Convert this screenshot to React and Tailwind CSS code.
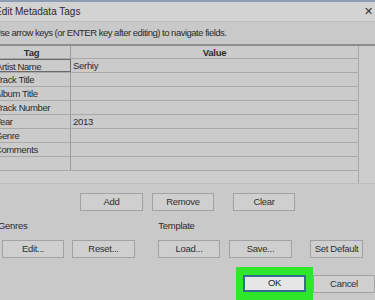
import React from "react";

const rows = [
  ["Artist Name", "Serhiy"],
  ["Track Title", ""],
  ["Album Title", ""],
  ["Track Number", ""],
  ["Year", "2013"],
  ["Genre", ""],
  ["Comments", ""],
  ["", ""],
];

function Btn({ children, className = "" }) {
  return (
    <div
      className={
        "h-[18px] flex items-center justify-center border border-[#a2a2a2] bg-[#cfcfcf] text-[#303030] shrink-0 " +
        className
      }
    >
      {children}
    </div>
  );
}

export default function App() {
  return (
    <div
      className="w-[375px] h-[300px] overflow-hidden bg-[#c9c9c9] text-[9.5px] tracking-[-0.3px] text-[#2b2b2b]"
      style={{ fontFamily: '"Liberation Sans", Arial, sans-serif' }}
    >
      <div className="h-[2px] bg-[#8d9db2]" />
      <div className="h-[20px] bg-[#d3d3d3] border-b border-[#bcbcbc] flex items-center justify-between">
        <span className="ml-[-5px] text-[10px] tracking-[0px]">Edit Metadata Tags</span>
        <span className="mr-[2px] text-[11px] text-[#333] leading-none">✕</span>
      </div>
      <div className="h-[22px] flex items-center">
        <span className="ml-[-6px] tracking-[-0.5px]">
          Use arrow keys (or ENTER key after editing) to navigate fields.
        </span>
      </div>
      <div className="border-t-2 border-[#8e8e8e] bg-[#cdcdcd] h-[139px] flex">
        <div className="w-[366px] ml-[-7px] border-r border-[#a8a8a8]">
          <div className="h-[13px] flex border-b border-[#a9a9a9] bg-[#cbcbcb] font-bold">
            <div className="w-[78px] border-r border-[#9a9a9a] text-center leading-[13px]">Tag</div>
            <div className="flex-1 text-center leading-[13px]">Value</div>
          </div>
          {rows.map(([t, v], i) => (
            <div key={i} className="h-[14px] flex border-b border-[#a9a9a9] bg-[#cbcbcb]">
              <div
                className={
                  "w-[78px] pl-[2px] leading-[13px] tracking-[-0.4px] border-r " +
                  (i === 0 ? "border border-[#6a6a6a]" : "border-[#9a9a9a]")
                }
              >
                {t}
              </div>
              <div className="flex-1 pl-[2px] leading-[13px]">{v}</div>
            </div>
          ))}
        </div>
      </div>
      <div className="h-[10px] border-t border-[#bdbdbd]" />
      <div className="flex h-[18px]">
        <Btn className="ml-[80px] w-[63px]">Add</Btn>
        <Btn className="ml-[9px] w-[62px]">Remove</Btn>
        <Btn className="ml-[19px] w-[62px]">Clear</Btn>
      </div>
      <div className="flex h-[29px] items-center pt-[1px]">
        <span className="ml-[-2px]">Genres</span>
        <span className="ml-[131px]">Template</span>
      </div>
      <div className="flex h-[18px]">
        <Btn className="ml-[2px] w-[62px]">Edit...</Btn>
        <Btn className="ml-[8px] w-[63px]">Reset...</Btn>
        <Btn className="ml-[23px] w-[62px]">Load...</Btn>
        <Btn className="ml-[9px] w-[63px]">Save...</Btn>
        <Btn className="ml-[18px] w-[53px]">Set Default</Btn>
      </div>
      <div className="flex mt-[9px]">
        <div className="ml-[236px] w-[78px] h-[40px] bg-[#2ee62a] pt-[8px] pl-[7px]">
          <div className="w-[63px] h-[17px] flex items-center justify-center bg-[#e6e6e6] border-2 border-[#2f6f8f] text-[#222]">
            OK
          </div>
        </div>
        <Btn className="mt-[8px] w-[62px]">Cancel</Btn>
      </div>
    </div>
  );
}
